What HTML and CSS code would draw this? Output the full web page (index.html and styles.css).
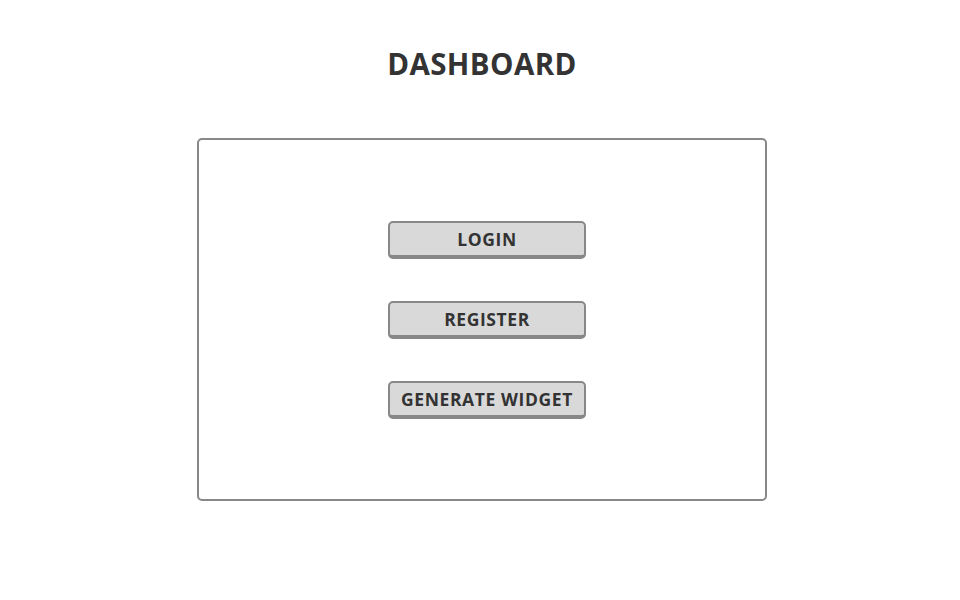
FILE: index.html
```html
<!DOCTYPE html>
<html lang="en">
<head>
  <meta charset="UTF-8">
  <meta name="viewport" content="width=device-width, initial-scale=1.0">
  <title>Dashboard</title>
  <link rel="stylesheet" href="styles.css">
</head>
<body>
  <h1 class="title">DASHBOARD</h1>

  <div class="panel">
    <button class="btn">LOGIN</button>
    <button class="btn">REGISTER</button>
    <button class="btn">GENERATE WIDGET</button>
  </div>
</body>
</html>
```

FILE: styles.css
```css
body {
  margin: 0;
  font-family: 'Open Sans', 'Liberation Sans', sans-serif;
  background: #ffffff;
  color: #333333;
}

.title {
  margin: 44px 0 0 4px;
  font-size: 29.5px;
  line-height: 40px;
  font-weight: 700;
  letter-spacing: 0.4px;
  text-align: center;
  color: #333333;
}

.panel {
  width: 556px;
  margin: 54px 0 0 197px;
  padding: 81px 0 80px 10px;
  border: 2px solid #888888;
  border-radius: 5px;
  display: flex;
  flex-direction: column;
  align-items: center;
  gap: 42px;
}

.btn {
  width: 198px;
  height: 38px;
  padding: 1px 0 0;
  border: 2px solid #888888;
  border-bottom-width: 4px;
  border-radius: 5px;
  background: #d9d9d9;
  color: #333333;
  font-family: 'Open Sans', 'Liberation Sans', sans-serif;
  font-size: 17.5px;
  font-weight: 700;
  letter-spacing: 0.6px;
  line-height: 31px;
  cursor: pointer;
}
```
